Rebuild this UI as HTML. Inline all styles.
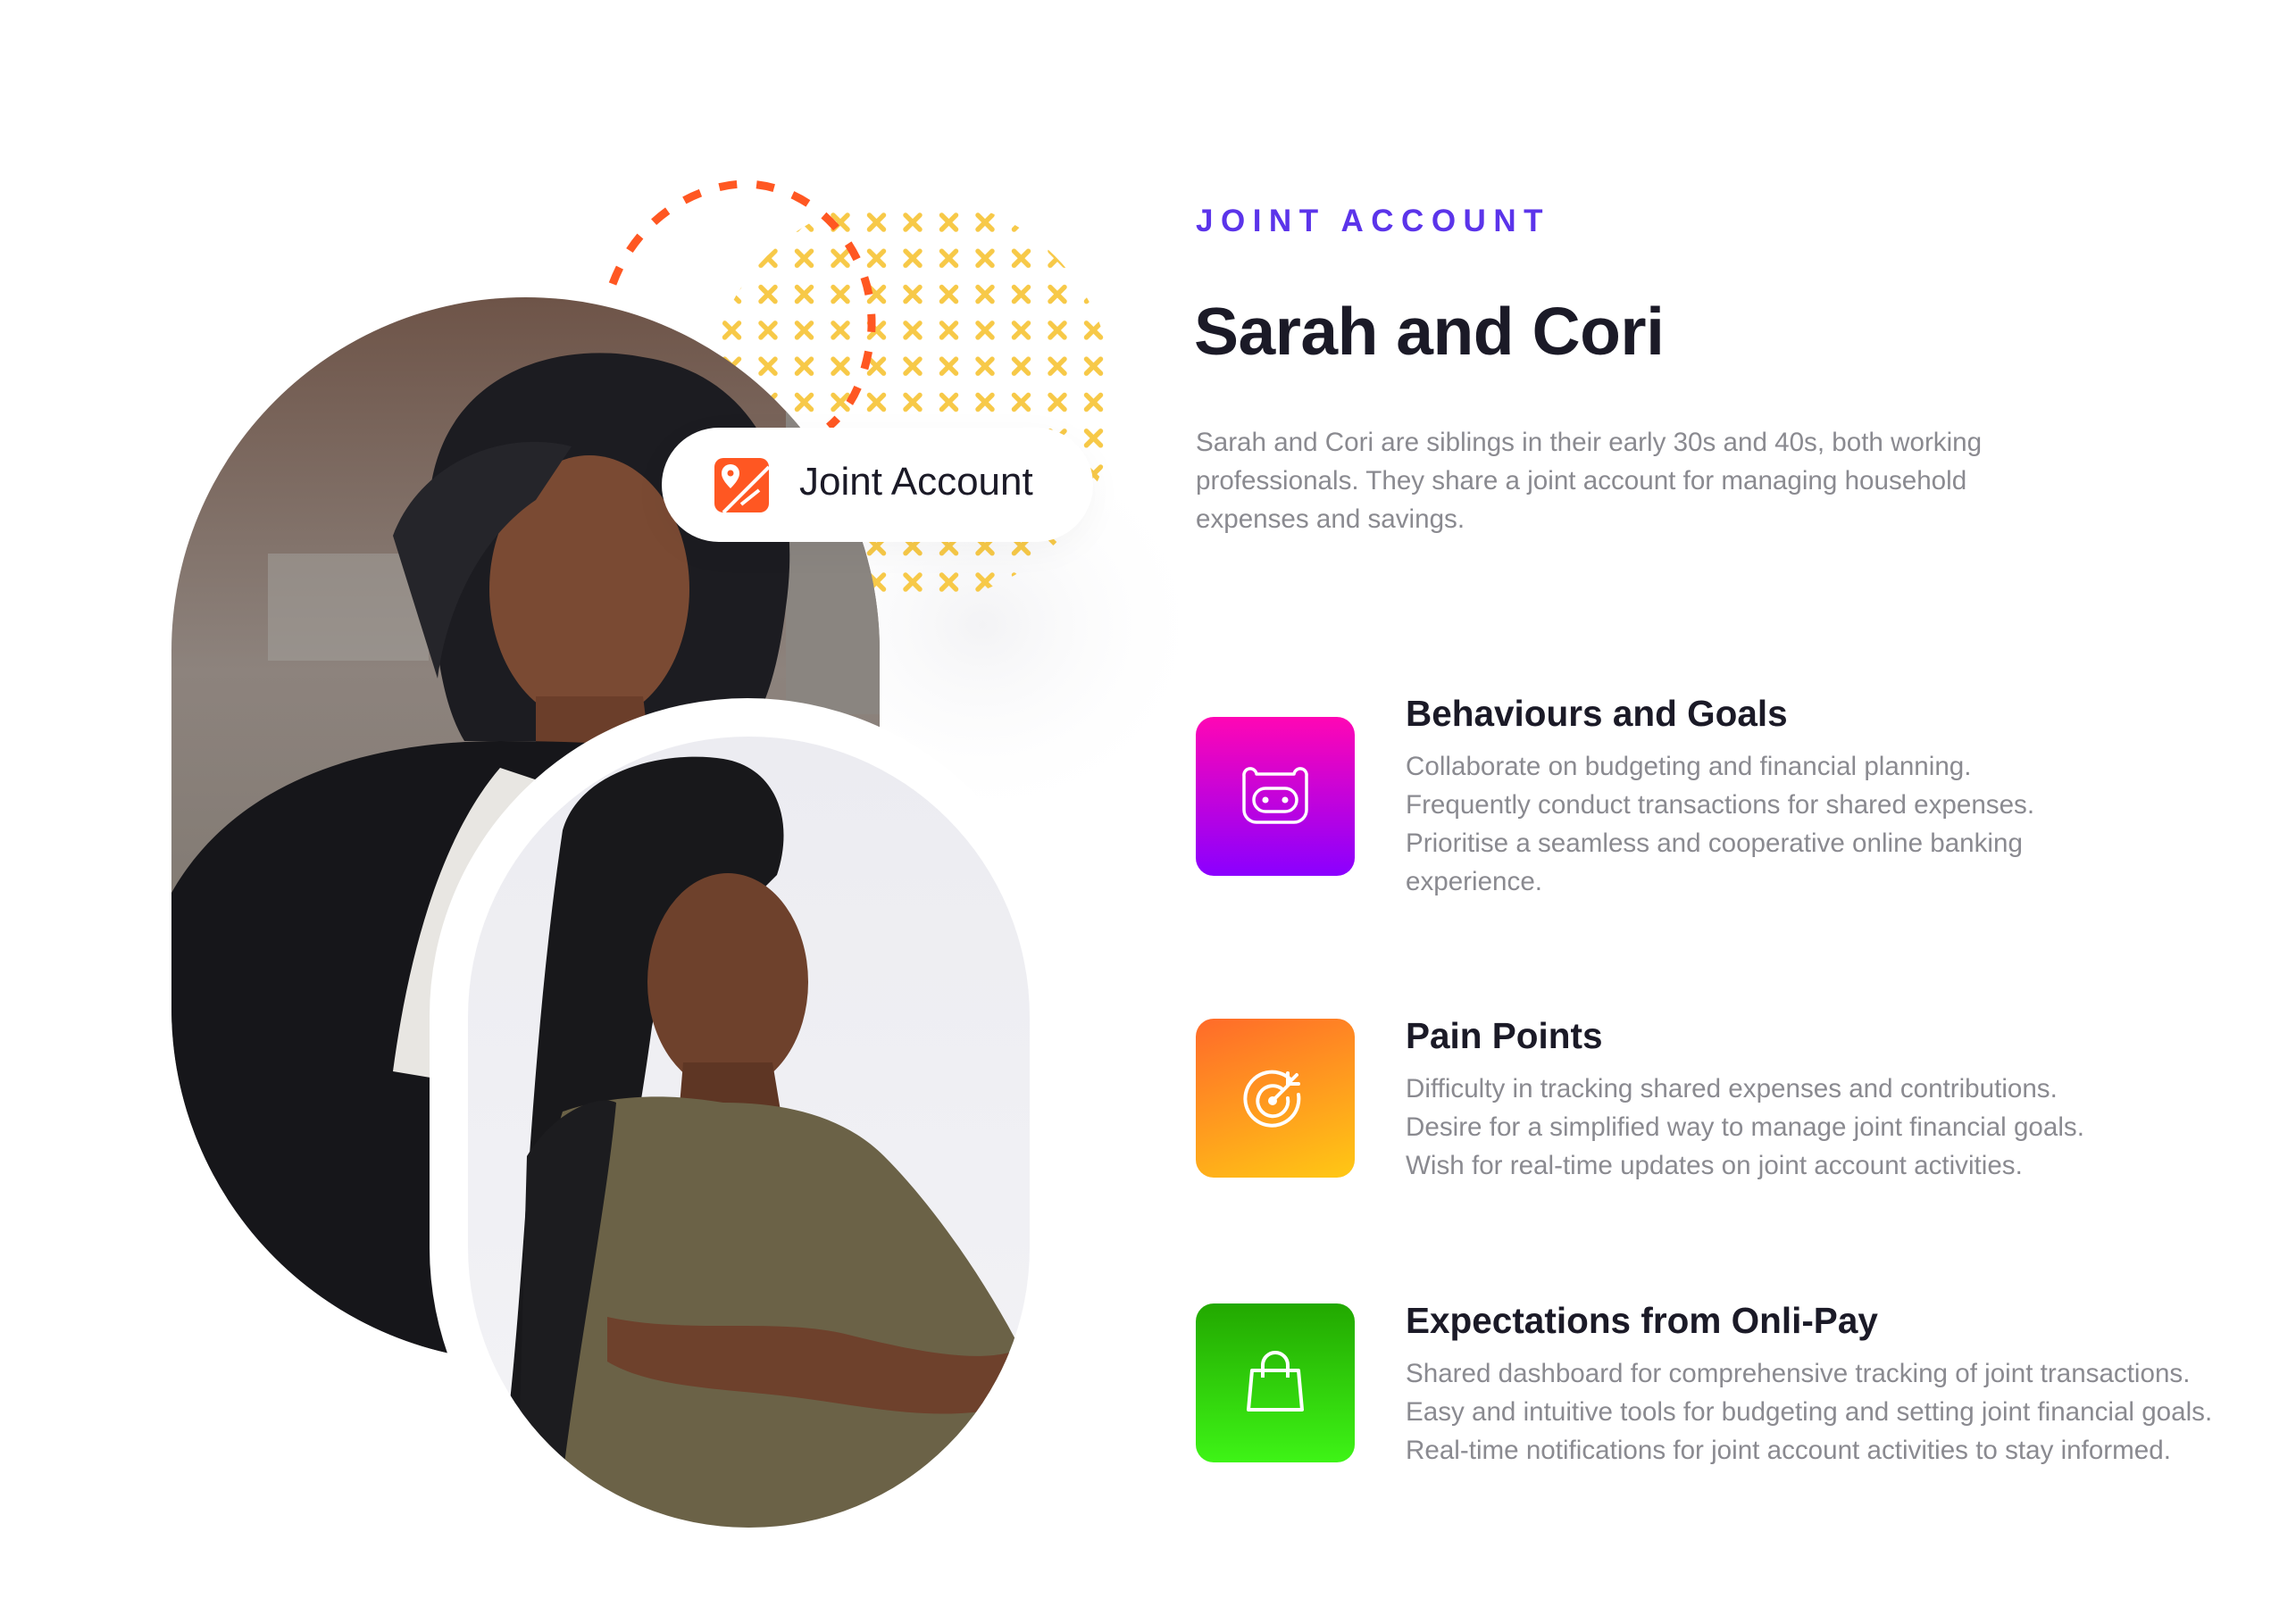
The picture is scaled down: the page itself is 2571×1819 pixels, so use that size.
<!DOCTYPE html>
<html><head><meta charset="utf-8"><style>
html,body{margin:0;padding:0;background:#fff;}
body{width:2571px;height:1819px;position:relative;overflow:hidden;font-family:"Liberation Sans",sans-serif;}
.abs{position:absolute;}
.eyebrow{left:1339px;top:228px;font-size:35px;font-weight:bold;letter-spacing:8.5px;color:#5b34ea;}
.title{left:1337px;top:328px;font-size:75px;font-weight:bold;color:#1b1a27;letter-spacing:-0.5px;}
.intro{left:1339px;top:474px;width:930px;font-size:29.6px;line-height:43px;color:#8a8a90;}
.box{width:178px;height:178px;border-radius:20px;left:1339px;display:flex;align-items:center;justify-content:center;}
.h{left:1574px;font-size:40.5px;font-weight:bold;color:#1b1a27;}
.p{left:1574px;font-size:29.6px;line-height:43px;color:#8a8a90;white-space:nowrap;}
</style></head><body>

<svg class="abs" style="left:0;top:0" width="1320" height="1819" viewBox="0 0 1320 1819">
  <defs>
    <clipPath id="dotc"><circle cx="1020" cy="448" r="228"/></clipPath>
    <pattern id="xp" x="840" y="229" width="40.5" height="40.3" patternUnits="userSpaceOnUse">
      <path d="M12 12 L28 28 M28 12 L12 28" stroke="#f7c948" stroke-width="5.5" stroke-linecap="round"/>
    </pattern>
    <clipPath id="c1"><rect x="192" y="333" width="793" height="1192" rx="396"/></clipPath>
    <clipPath id="c2"><rect x="524" y="825" width="629" height="886" rx="314"/></clipPath>
    <linearGradient id="bg1" x1="0" y1="0" x2="0" y2="1">
      <stop offset="0" stop-color="#6e5448"/><stop offset="0.35" stop-color="#8d837d"/><stop offset="0.7" stop-color="#7c766e"/><stop offset="1" stop-color="#4a4642"/>
    </linearGradient>
    <linearGradient id="bg2" x1="0" y1="0" x2="0" y2="1">
      <stop offset="0" stop-color="#ececf1"/><stop offset="1" stop-color="#f3f3f6"/>
    </linearGradient>
    <radialGradient id="glow" cx="0.5" cy="0.5" r="0.5">
      <stop offset="0" stop-color="#f3f3f5"/><stop offset="1" stop-color="#ffffff" stop-opacity="0"/>
    </radialGradient>
  </defs>
  <ellipse cx="1100" cy="700" rx="260" ry="230" fill="url(#glow)"/>
  <rect x="780" y="200" width="480" height="500" fill="url(#xp)" clip-path="url(#dotc)"/>
  <path d="M686 318 C715 240 785 205 838 206 C920 210 985 290 975 380 C968 425 955 455 928 478" fill="none" stroke="#ff5722" stroke-width="9" stroke-dasharray="20 22"/>

  <!-- woman 1 -->
  <g clip-path="url(#c1)">
    <rect x="192" y="333" width="793" height="1192" fill="url(#bg1)"/>
    <rect x="880" y="380" width="106" height="420" fill="#8a8580"/>
    <rect x="300" y="620" width="180" height="120" fill="#a09c98" opacity="0.6"/>
    <path d="M480 600 C470 420 620 380 720 400 C850 420 900 540 880 680 C870 760 850 820 820 830 L520 830 C490 780 485 700 480 600Z" fill="#1c1c21"/>
    <ellipse cx="660" cy="660" rx="112" ry="150" fill="#7a4a33"/>
    <path d="M600 780 L720 780 L730 860 L600 870Z" fill="#6b3e2a"/>
    <path d="M192 1000 C260 880 400 830 560 830 C700 830 820 840 900 880 L986 960 L986 1583 L192 1583Z" fill="#16161a"/>
    <path d="M560 860 C500 930 460 1050 440 1200 L500 1210 C540 1080 580 960 620 880Z" fill="#e8e6e2"/>
    <path d="M440 600 C470 520 560 480 640 500 L600 560 C540 600 500 680 490 760Z" fill="#25252a"/>
  </g>

  <!-- white frame + woman 2 -->
  <rect x="481" y="782" width="712" height="972" rx="356" fill="#fff"/>
  <g clip-path="url(#c2)">
    <rect x="524" y="825" width="629" height="886" fill="url(#bg2)"/>
    <path d="M630 930 C650 860 750 840 810 850 C870 860 890 920 870 980 L850 1000 C790 1000 750 1050 730 1150 C710 1300 670 1500 630 1660 L560 1660 C590 1450 590 1200 630 930Z" fill="#18181b"/>
    <ellipse cx="815" cy="1100" rx="90" ry="122" fill="#6e412c"/>
    <path d="M765 1190 L865 1190 L875 1250 L760 1250Z" fill="#5e3624"/>
    <path d="M630 1245 C690 1225 750 1225 810 1235 C890 1235 950 1255 990 1295 C1050 1355 1110 1445 1150 1525 L1150 1715 L600 1715 C580 1545 590 1375 630 1245Z" fill="#6b6247"/>
    <path d="M680 1475 C770 1495 870 1475 950 1495 C1030 1515 1090 1525 1130 1515 L1130 1575 C1050 1595 970 1575 890 1565 C810 1555 730 1555 680 1525Z" fill="#6e412c"/>
    <path d="M590 1295 C620 1245 670 1225 690 1235 C680 1345 650 1495 630 1655 L580 1655Z" fill="#1c1c1f"/>
  </g>
</svg>

<!-- badge -->
<div class="abs" style="left:741px;top:479px;width:483px;height:128px;border-radius:64px;background:#fff;box-shadow:0 10px 40px rgba(0,0,0,0.04);"></div>
<svg class="abs" style="left:800px;top:513px" width="61" height="61" viewBox="0 0 61 61">
  <rect width="61" height="61" rx="10" fill="#ff5722"/>
  <path d="M61 10 L10 61" stroke="#fff" stroke-width="4"/>
  <path d="M30 52 L50 36" stroke="#fff" stroke-width="4"/>
  <path d="M18 34 C10 26 8 21 8 17 A10 10 0 0 1 28 17 C28 21 26 26 18 34Z" fill="#fff"/>
  <circle cx="18" cy="17" r="3.5" fill="#ff5722"/>
</svg>
<div class="abs" style="left:895px;top:515px;font-size:44px;color:#1b1a27;">Joint Account</div>

<!-- right content -->
<div class="abs eyebrow">JOINT ACCOUNT</div>
<div class="abs title">Sarah and Cori</div>
<div class="abs intro">Sarah and Cori are siblings in their early 30s and 40s, both working professionals. They share a joint account for managing household expenses and savings.</div>

<div class="abs box" style="top:803px;background:linear-gradient(180deg,#ff06b4,#8a00ff);">
  <svg width="78" height="66" viewBox="0 0 78 66" fill="none" stroke="#fff" stroke-width="3.5" stroke-linejoin="round">
    <path d="M4 18 L4 10 A7 7 0 0 1 18 8 L60 8 A7 7 0 0 1 74 10 L74 48 A14 14 0 0 1 60 62 L18 62 A14 14 0 0 1 4 48Z"/>
    <rect x="15" y="24" width="48" height="26" rx="13"/>
    <circle cx="28" cy="37" r="1.8" fill="#fff"/><circle cx="50" cy="37" r="1.8" fill="#fff"/>
  </svg>
</div>
<div class="abs h" style="top:776px;">Behaviours and Goals</div>
<div class="abs p" style="top:837px;">Collaborate on budgeting and financial planning.<br>Frequently conduct transactions for shared expenses.<br>Prioritise a seamless and cooperative online banking<br>experience.</div>

<div class="abs box" style="top:1141px;background:linear-gradient(160deg,#ff6a2a,#ffc814);">
  <svg width="72" height="72" viewBox="0 0 72 72" fill="none" stroke="#fff" stroke-width="4" stroke-linecap="round">
    <path d="M52 14 A30 30 0 1 0 62 32"/>
    <path d="M44 26 A17 17 0 1 0 50 36"/>
    <circle cx="33" cy="39" r="3" fill="#fff"/>
    <path d="M33 39 L52 20 M50 8 L50 20 L62 20 M50 20 L60 10"/>
  </svg>
</div>
<div class="abs h" style="top:1137px;">Pain Points</div>
<div class="abs p" style="top:1198px;">Difficulty in tracking shared expenses and contributions.<br>Desire for a simplified way to manage joint financial goals.<br>Wish for real-time updates on joint account activities.</div>

<div class="abs box" style="top:1460px;background:linear-gradient(180deg,#22a800,#3ef416);">
  <svg width="68" height="72" viewBox="0 0 68 72" fill="none" stroke="#fff" stroke-width="4" stroke-linejoin="round">
    <path d="M8 22 L60 22 L64 66 L4 66Z"/>
    <path d="M20 30 L20 16 A14 14 0 0 1 48 16 L48 30"/>
  </svg>
</div>
<div class="abs h" style="top:1456px;">Expectations from Onli-Pay</div>
<div class="abs p" style="top:1517px;">Shared dashboard for comprehensive tracking of joint transactions.<br>Easy and intuitive tools for budgeting and setting joint financial goals.<br>Real-time notifications for joint account activities to stay informed.</div>

</body></html>
